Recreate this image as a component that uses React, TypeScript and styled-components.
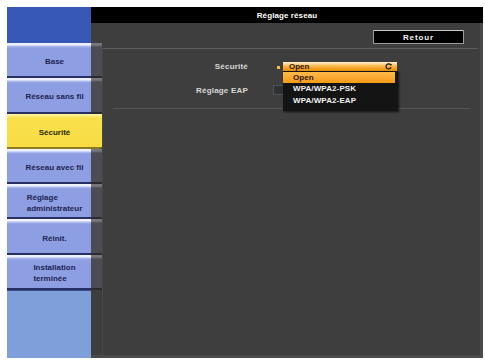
import React from 'react';
import styled, { createGlobalStyle } from 'styled-components';

const GlobalStyle = createGlobalStyle`
  html, body {
    margin: 0;
    background: #fff;
  }
  body {
    padding: 7px 0 0 7px;
    font-family: "Liberation Sans", Arial, sans-serif;
    font-weight: bold;
    font-size: 8px;
  }
`;

const Frame = styled.div`
  display: grid;
  grid-template-columns: 84px 11px 1fr;
  grid-template-rows: 16px 20px 1fr;
  width: 476px;
  height: 351px;
  background: #3e3e3e;
  box-shadow: inset -3px -3px 0 #4a4a4a;
`;

const SideTop = styled.div`
  grid-column: 1;
  grid-row: 1 / 3;
  background: #3858b7;
`;

const TitleBar = styled.div`
  grid-column: 2 / 4;
  grid-row: 1;
  background: #000;
  color: #fff;
  display: flex;
  align-items: center;
  justify-content: center;
  letter-spacing: 0.1px;
`;

const TabRail = styled.nav`
  grid-column: 1 / 3;
  grid-row: 3;
  display: flex;
  flex-direction: column;
`;

const TabList = styled.div`
  height: 247px;
  display: flex;
  flex-direction: column;
`;

const Tab = styled.div<{ $active?: boolean }>`
  flex: 1;
  display: flex;
  align-items: center;
  justify-content: center;
  padding-top: 2px;
  color: ${(p) => (p.$active ? '#2c2a0c' : '#1d2553')};
  line-height: 11px;
  background: ${(p) =>
    p.$active
      ? 'linear-gradient(to bottom, #fff6b0 0, #f9e04b 4px, #f7dc45 calc(100% - 2px), #8c7a1c calc(100% - 2px))'
      : `linear-gradient(to bottom, #eef1fb 0, #eef1fb 2px, #b3bff0 3px, #8d9fe2 5px, #8d9fe2 calc(100% - 2px), #273060 calc(100% - 2px)) 0 0 / 84px 100% no-repeat,
         linear-gradient(to bottom, #77777d 0, #77777d 2px, #4c4c55 4px, #4c4c55 calc(100% - 2px), #2a2a30 calc(100% - 2px)) 84px 0 / 11px 100% no-repeat`};
  border-bottom-right-radius: ${(p) => (p.$active ? '3px' : '0')};

  span {
    display: inline-block;
    text-align: left;
  }
`;

const Filler = styled.div`
  flex: 1;
  width: 84px;
  background: #7f9fda;
  border-top: 1px solid #3c4c90;
`;

const Main = styled.section`
  grid-column: 3;
  grid-row: 2 / 4;
  display: flex;
  flex-direction: column;
  min-width: 0;
`;

const Toolbar = styled.div`
  height: 25px;
  box-sizing: border-box;
  display: flex;
  justify-content: flex-end;
  padding: 7px 19px 0 0;
`;

const BackButton = styled.button`
  width: 91px;
  height: 14px;
  padding: 0;
  background: #000;
  border: 1px solid #9c9c9c;
  border-top-color: #c8c8c8;
  border-radius: 1px;
  color: #f4f4f4;
  font: inherit;
  letter-spacing: 0.9px;
  cursor: pointer;
`;

const Section = styled.div`
  flex: 1;
  margin: 0 5px 3px 0;
  border-top: 1px solid #5c5c5c;
  border-left: 1px solid #474747;
  padding-top: 6px;
`;

const Row = styled.div<{ $front?: boolean }>`
  height: 22px;
  margin-bottom: 2px;
  display: flex;
  align-items: center;
  gap: 25px;
  position: relative;
  z-index: ${(p) => (p.$front ? 2 : 1)};
`;

const Label = styled.div`
  width: 145px;
  text-align: right;
  color: #d8d8d8;
  letter-spacing: 0.2px;
`;

const Control = styled.div`
  display: flex;
  align-items: center;
`;

const Marker = styled.div`
  width: 10px;
  height: 10px;
  display: flex;
  align-items: center;
  justify-content: center;

  &::after {
    content: '';
    width: 3px;
    height: 3px;
    margin-top: 2px;
    background: #ffb640;
  }
`;

const SelectBox = styled.div`
  position: relative;
  width: 114px;
  height: 9px;
  box-sizing: border-box;
  padding: 0 5px 0 6px;
  display: flex;
  align-items: center;
  justify-content: space-between;
  color: #2b1600;
  background: linear-gradient(to bottom, #fff3d8 0, #fbc466 35%, #f5a020 70%, #ee9412 100%);
`;

const OptionList = styled.ul`
  position: absolute;
  top: 100%;
  left: 0;
  width: 115px;
  margin: 0;
  padding: 1px 3px 4px 0;
  box-sizing: border-box;
  list-style: none;
  background: #141414;
  box-shadow: 1px 1px 2px rgba(0, 0, 0, 0.7);
`;

const Option = styled.li<{ $selected?: boolean }>`
  height: ${(p) => (p.$selected ? '11px' : '12px')};
  display: flex;
  align-items: center;
  padding-left: 10px;
  color: ${(p) => (p.$selected ? '#2b1600' : '#f2f2f2')};
  background: ${(p) => (p.$selected ? 'linear-gradient(to bottom, #ffbb4a, #f59a18)' : 'transparent')};
  letter-spacing: 0.1px;
`;

const EapField = styled.div`
  width: 124px;
  height: 10px;
  background: #2f3133;
  border: 1px solid #4f5355;
  box-sizing: border-box;
`;

const Separator = styled.hr`
  margin: 7px 8px 0 10px;
  border: none;
  border-top: 1px solid #555;
`;

const tabs = [
  ['Base'],
  ['Réseau sans fil'],
  ['Sécurité'],
  ['Réseau avec fil'],
  ['Réglage', 'administrateur'],
  ['Réinit.'],
  ['Installation', 'terminée'],
];

function CycleIcon() {
  return (
    <svg width="7" height="7" viewBox="0 0 7 7">
      <path d="M5.6 2 A2.5 2.5 0 1 0 5.9 4.2" fill="none" stroke="#1a1a1a" strokeWidth="1.3" />
      <path d="M4.3 0.6 L6.8 0.9 L6 3.2 Z" fill="#1a1a1a" />
    </svg>
  );
}

export default function App() {
  const active = 2;
  const options = ['Open', 'WPA/WPA2-PSK', 'WPA/WPA2-EAP'];

  return (
    <>
      <GlobalStyle />
      <Frame>
        <SideTop />
        <TitleBar>Réglage réseau</TitleBar>
        <TabRail>
          <TabList>
            {tabs.map((lines, i) => (
              <Tab key={lines.join()} $active={i === active}>
                <span>
                  {lines.map((l, j) => (
                    <React.Fragment key={l}>
                      {j > 0 && <br />}
                      {l}
                    </React.Fragment>
                  ))}
                </span>
              </Tab>
            ))}
          </TabList>
          <Filler />
        </TabRail>
        <Main>
          <Toolbar>
            <BackButton>Retour</BackButton>
          </Toolbar>
          <Section>
            <Row $front>
              <Label>Sécurité</Label>
              <Control>
                <Marker />
                <SelectBox>
                  <span>Open</span>
                  <CycleIcon />
                  <OptionList>
                    {options.map((o, i) => (
                      <Option key={o} $selected={i === 0}>
                        {o}
                      </Option>
                    ))}
                  </OptionList>
                </SelectBox>
              </Control>
            </Row>
            <Row>
              <Label>Réglage EAP</Label>
              <Control>
                <EapField />
              </Control>
            </Row>
            <Separator />
          </Section>
        </Main>
      </Frame>
    </>
  );
}
